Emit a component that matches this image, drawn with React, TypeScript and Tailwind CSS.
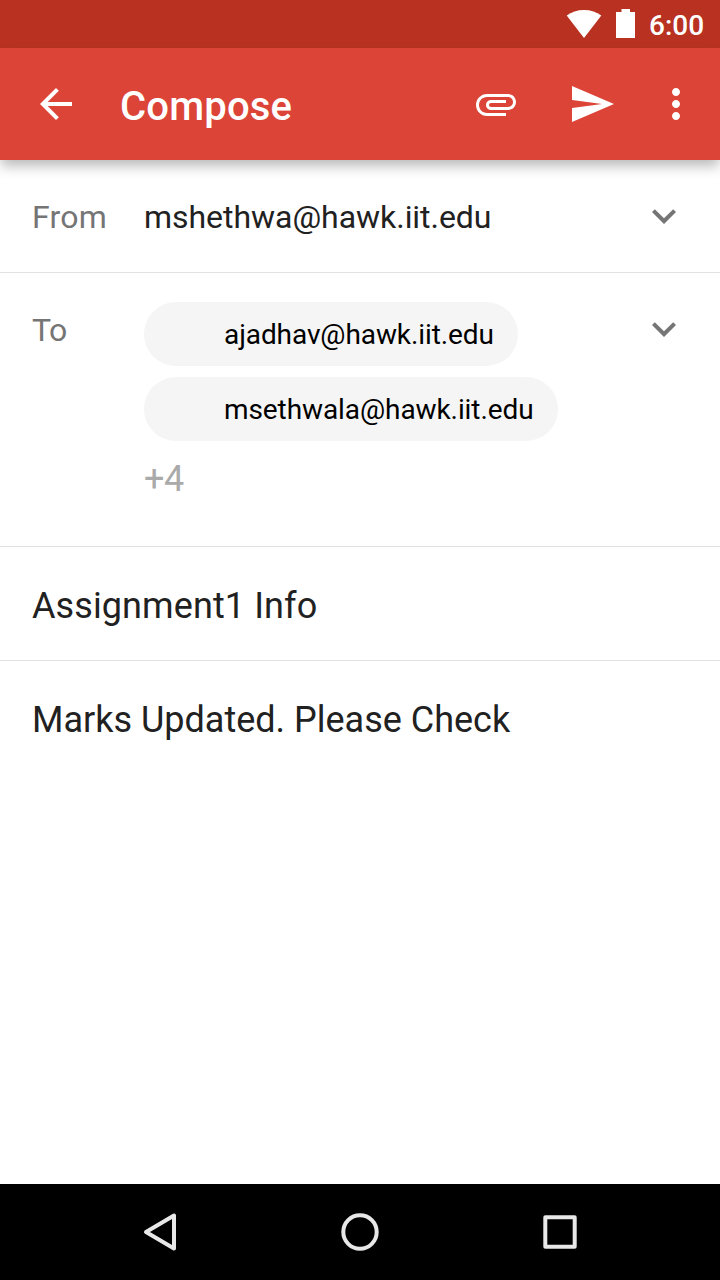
import type { ReactNode } from "react";

function Icon({ d, className }: { d: string; className?: string }) {
  return (
    <svg viewBox="0 0 24 24" fill="currentColor" className={`size-12 shrink-0 ${className ?? ""}`}>
      <path d={d} />
    </svg>
  );
}

const BACK = "M20 11H7.83l5.59-5.59L12 4l-8 8 8 8 1.41-1.41L7.83 13H20v-2z";
const ATTACH =
  "M7.5 18C4.46 18 2 15.54 2 12.5S4.46 7 7.5 7H18c2.21 0 4 1.79 4 4s-1.79 4-4 4H9.5C8.12 15 7 13.88 7 12.5S8.12 10 9.5 10H17v1.5H9.5c-.55 0-1 .45-1 1s.45 1 1 1H18c1.38 0 2.5-1.12 2.5-2.5S19.38 8.5 18 8.5H7.5c-2.21 0-4 1.79-4 4s1.79 4 4 4H17V18H7.5z";
const SEND = "M2.01 21L23 12 2.01 3 2 10l15 2-15 2z";
const MORE =
  "M12 8c1.1 0 2-.9 2-2s-.9-2-2-2-2 .9-2 2 .9 2 2 2zm0 2c-1.1 0-2 .9-2 2s.9 2 2 2 2-.9 2-2-.9-2-2-2zm0 6c-1.1 0-2 .9-2 2s.9 2 2 2 2-.9 2-2-.9-2-2-2z";
const EXPAND = "M16.59 8.59L12 13.17 7.41 8.59 6 10l6 6 6-6z";

function StatusBar() {
  return (
    <div className="flex h-12 shrink-0 items-start bg-[#b93221] pl-[566px] text-white">
      <svg viewBox="0 0 36 48" fill="currentColor" className="h-12 w-9">
        <path d="M.7 15.6C5.500 12 11.300 10 18 10s12.500 2 17.300 5.600L18 38z" />
      </svg>
      <svg viewBox="0 0 20 48" fill="currentColor" className="ml-3.5 h-12 w-5">
        <path d="M5.500 9h8.500v3h5v26H0V12h5.500z" />
      </svg>
      <span className="ml-[13px] text-[28px] leading-[52px] font-medium">6:00</span>
    </div>
  );
}

function AppBar() {
  return (
    <header className="z-10 flex h-28 shrink-0 items-center bg-[#db4437] pr-5 pl-8 text-white shadow-[0_7px_12px_-1px_rgba(0,0,0,0.28)]">
      <Icon d={BACK} />
      <h1 className="ml-10 flex-1 pt-1.5 text-[40px] leading-[48px] font-medium tracking-[0.2px]">Compose</h1>
      <Icon d={ATTACH} />
      <Icon d={SEND} className="ml-12" />
      <Icon d={MORE} className="ml-9" />
    </header>
  );
}

function Chip({ children }: { children: ReactNode }) {
  return (
    <span className="flex h-16 items-center rounded-full bg-[#f5f5f5] pt-0.5 pr-6 pl-20 text-[28px] tracking-[-0.085px] text-black">
      {children}
    </span>
  );
}

function NavBar() {
  return (
    <nav className="flex h-24 shrink-0 items-center justify-between bg-black px-[136px] text-[#e8e8e8]">
      <svg viewBox="0 0 48 48" fill="none" stroke="currentColor" strokeWidth="4" strokeLinejoin="round" className="size-12">
        <path d="M10 24 38 7.500v33z" />
      </svg>
      <svg viewBox="0 0 48 48" fill="none" stroke="currentColor" strokeWidth="4" className="size-12">
        <circle cx="24" cy="24" r="16.700" />
      </svg>
      <svg viewBox="0 0 48 48" fill="none" stroke="currentColor" strokeWidth="4" strokeLinejoin="round" className="size-12">
        <path d="M9.300 9.300h29.400v29.400H9.300z" />
      </svg>
    </nav>
  );
}

export default function App() {
  return (
    <div className="flex h-[1280px] w-[720px] flex-col overflow-hidden bg-white font-['Roboto',sans-serif] text-[#212121]">
      <StatusBar />
      <AppBar />
      <main className="flex flex-1 flex-col">
        <div className="flex h-[113px] items-start border-b border-[#e2e2e2] pt-8 pr-8 pl-8">
          <span className="w-28 pt-[1px] text-[32px] leading-[48px] tracking-[0.2px] text-[#757575]">From</span>
          <span className="flex-1 pt-[1px] text-[32px] leading-[48px] tracking-[-0.04px]">mshethwa@hawk.iit.edu</span>
          <Icon d={EXPAND} className="text-[#757575]" />
        </div>
        <div className="flex h-[274px] items-start border-b border-[#e2e2e2] pr-8 pl-8">
          <span className="w-28 pt-[33px] text-[32px] leading-[48px] tracking-[-0.5px] text-[#757575]">To</span>
          <div className="flex flex-1 flex-col items-start gap-[11px] pt-[29px]">
            <Chip>ajadhav@hawk.iit.edu</Chip>
            <Chip>msethwala@hawk.iit.edu</Chip>
            <span className="pt-[3px] text-[36px] leading-[48px] tracking-[-0.4px] text-[#aaaaaa]">+4</span>
          </div>
          <Icon d={EXPAND} className="mt-8 text-[#757575]" />
        </div>
        <div className="h-[114px] border-b border-[#e2e2e2] pt-[35px] pl-8 text-[36px] leading-[48px] tracking-[0.1px]">
          Assignment1 Info
        </div>
        <div className="pt-[35px] pl-8 text-[36px] leading-[48px]">Marks Updated. Please Check</div>
      </main>
      <NavBar />
    </div>
  );
}
